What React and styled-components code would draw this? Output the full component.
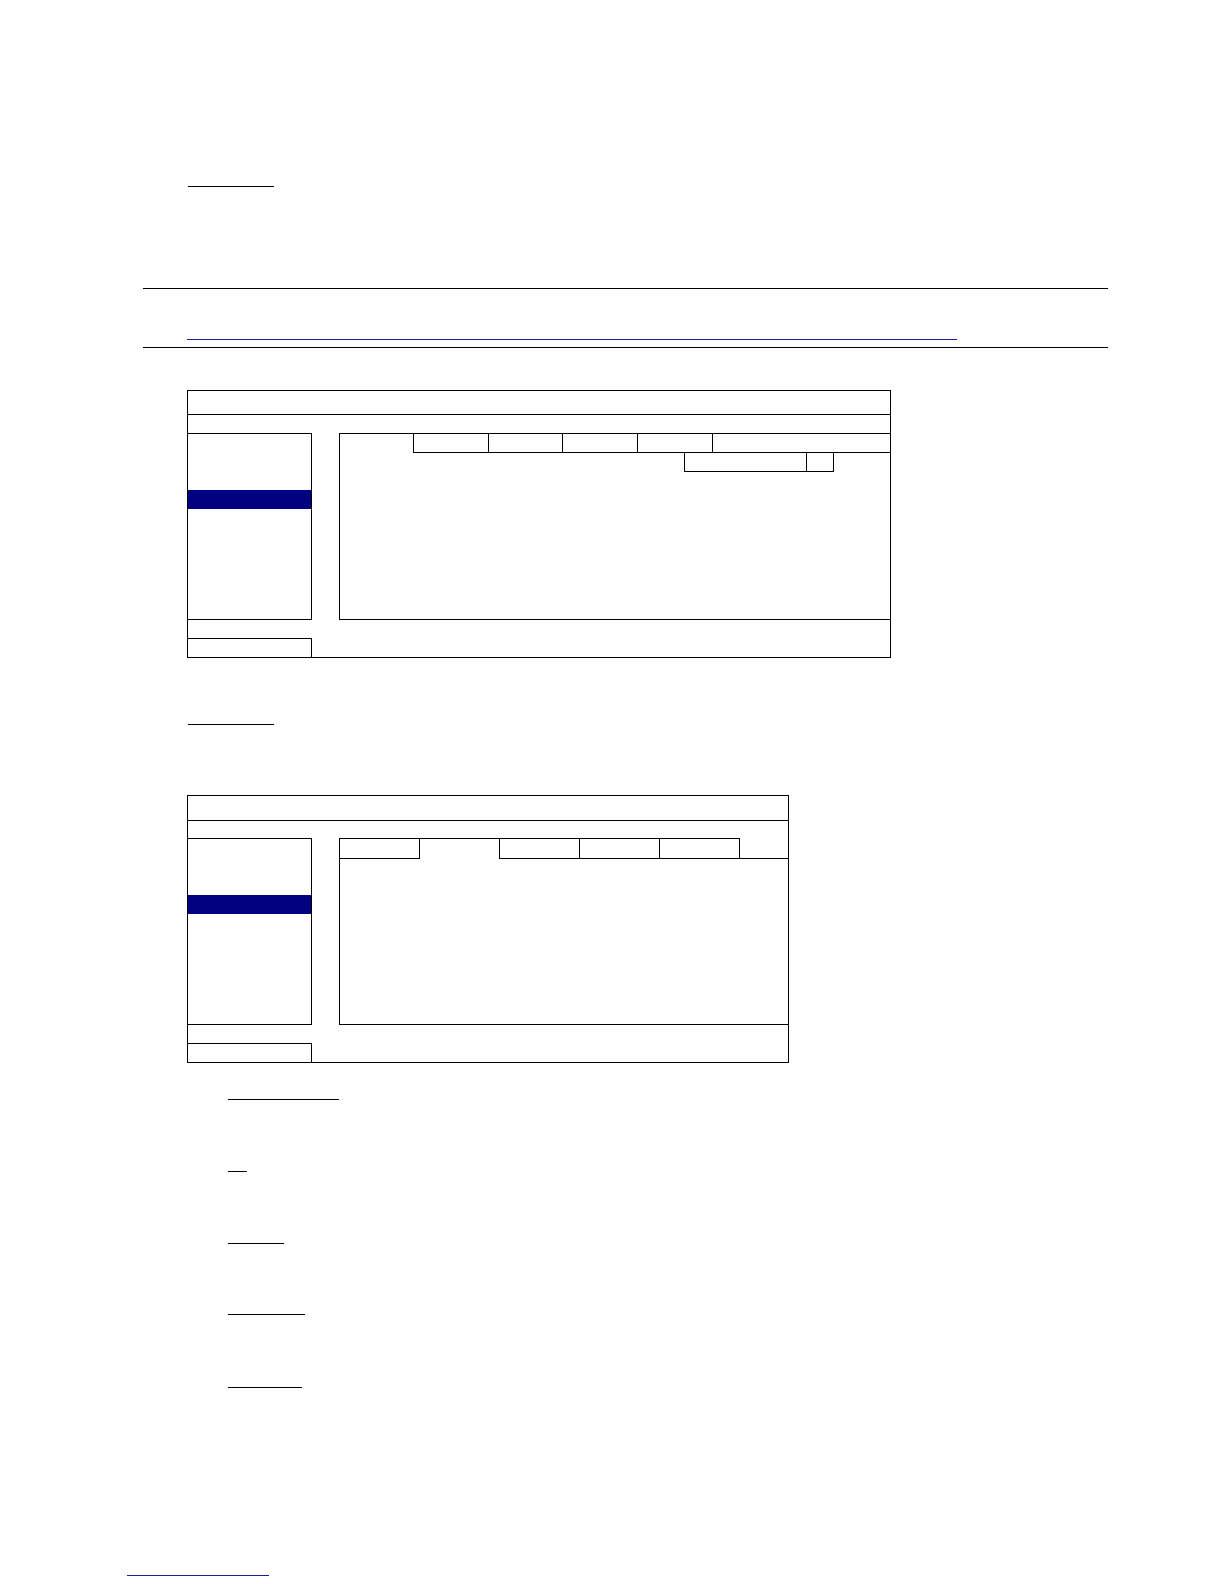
import React from "react";
import styled, { createGlobalStyle } from "styled-components";

const Global = createGlobalStyle`
  *, *::before, *::after { box-sizing: border-box; }
  html, body { margin: 0; padding: 0; background: #fff; }
  body { font-family: "Liberation Sans", Arial, sans-serif; color: #000; }
`;

const Page = styled.div`
  width: 1224px;
  min-height: 1584px;
  background: #fff;
  display: flex;
  flex-direction: column;
  align-items: flex-start;
`;

const Underline = styled.div`
  margin-top: ${(p) => p.$top}px;
  margin-left: ${(p) => p.$left}px;
  width: ${(p) => p.$w}px;
  height: 1px;
  background: ${(p) => (p.$blue ? "#1c1c96" : "#000")};
`;

const Rule = styled.hr`
  margin: ${(p) => p.$top}px 0 0 143px;
  width: 965px;
  height: 1px;
  border: none;
  background: #000;
`;

const Dialog = styled.div`
  margin-top: ${(p) => p.$top}px;
  margin-left: 187px;
  width: ${(p) => p.$w}px;
  border: 1px solid #000;
  background: #fff;
  display: flex;
  flex-direction: column;
`;

const TitleBar = styled.div`
  height: ${(p) => p.$h}px;
  border-bottom: 1px solid #000;
`;

const Body = styled.div`
  margin-top: ${(p) => p.$gap}px;
  height: 187px;
  display: flex;
  gap: 27px;
`;

const Sidebar = styled.div`
  width: 124px;
  border-top: 1px solid #000;
  border-right: 1px solid #000;
  border-bottom: 1px solid #000;
  padding-top: 18px;
  display: flex;
  flex-direction: column;
`;

const MenuItem = styled.div`
  height: 19px;
  background: ${(p) => (p.$active ? "#000080" : "transparent")};
`;

const Content = styled.div`
  flex: 1;
  border-left: 1px solid #000;
  border-bottom: 1px solid #000;
  border-top: ${(p) => (p.$topBorder ? "1px solid #000" : "none")};
  display: flex;
  flex-direction: column;
`;

const TabRow = styled.div`
  display: flex;
  padding-left: ${(p) => p.$indent || 0}px;
`;

const BoxTab = styled.div`
  width: ${(p) => p.$w || 75}px;
  height: 19px;
  border-left: 1px solid #000;
  border-bottom: 1px solid #000;
`;

const BoxTabFill = styled(BoxTab)`
  width: auto;
  flex: 1;
`;

const SubRow = styled.div`
  display: flex;
  margin-left: 344px;
`;

const SubCell = styled.div`
  width: ${(p) => p.$w}px;
  height: 19px;
  border-left: 1px solid #000;
  border-bottom: 1px solid #000;
  border-right: ${(p) => (p.$last ? "1px solid #000" : "none")};
`;

const FolderTab = styled.div`
  width: 80px;
  height: 21px;
  border-top: 1px solid #000;
  border-right: 1px solid #000;
  border-bottom: ${(p) => (p.$active ? "none" : "1px solid #000")};
`;

const FolderFill = styled.div`
  flex: 1;
  height: 21px;
  border-bottom: 1px solid #000;
`;

const Footer = styled.div`
  margin-top: 18px;
  display: flex;
`;

const FooterBox = styled.div`
  width: 124px;
  height: 19px;
  border-top: 1px solid #000;
  border-right: 1px solid #000;
`;

const menu = [0, 1, 2, 3, 4, 5, 6, 7];
const boxTabs = [75, 74, 75, 75];

function Menu() {
  return (
    <Sidebar>
      {menu.map((i) => (
        <MenuItem key={i} $active={i === 2} />
      ))}
    </Sidebar>
  );
}

export default function App() {
  return (
    <>
      <Global />
      <Page>
        <Underline $top={186} $left={188} $w={86} />
        <Rule $top={101} />
        <Underline $top={50} $left={187} $w={770} $blue />
        <Rule $top={7} />

        <Dialog $top={42} $w={704}>
          <TitleBar $h={24} />
          <Body $gap={18}>
            <Menu />
            <Content $topBorder>
              <TabRow $indent={73}>
                {boxTabs.map((w, i) => (
                  <BoxTab key={i} $w={w} />
                ))}
                <BoxTabFill />
              </TabRow>
              <SubRow>
                <SubCell $w={122} />
                <SubCell $w={28} $last />
              </SubRow>
            </Content>
          </Body>
          <Footer>
            <FooterBox />
          </Footer>
        </Dialog>

        <Underline $top={66} $left={188} $w={86} />

        <Dialog $top={70} $w={602}>
          <TitleBar $h={25} />
          <Body $gap={17}>
            <Menu />
            <Content>
              <TabRow>
                <FolderTab />
                <FolderTab $active />
                <FolderTab />
                <FolderTab />
                <FolderTab />
                <FolderFill />
              </TabRow>
            </Content>
          </Body>
          <Footer>
            <FooterBox />
          </Footer>
        </Dialog>

        <Underline $top={36} $left={228} $w={111} />
        <Underline $top={71} $left={228} $w={19} />
        <Underline $top={71} $left={228} $w={56} />
        <Underline $top={70} $left={228} $w={77} />
        <Underline $top={72} $left={228} $w={74} />

        <Underline $top={187} $left={127} $w={142} $blue />
      </Page>
    </>
  );
}
